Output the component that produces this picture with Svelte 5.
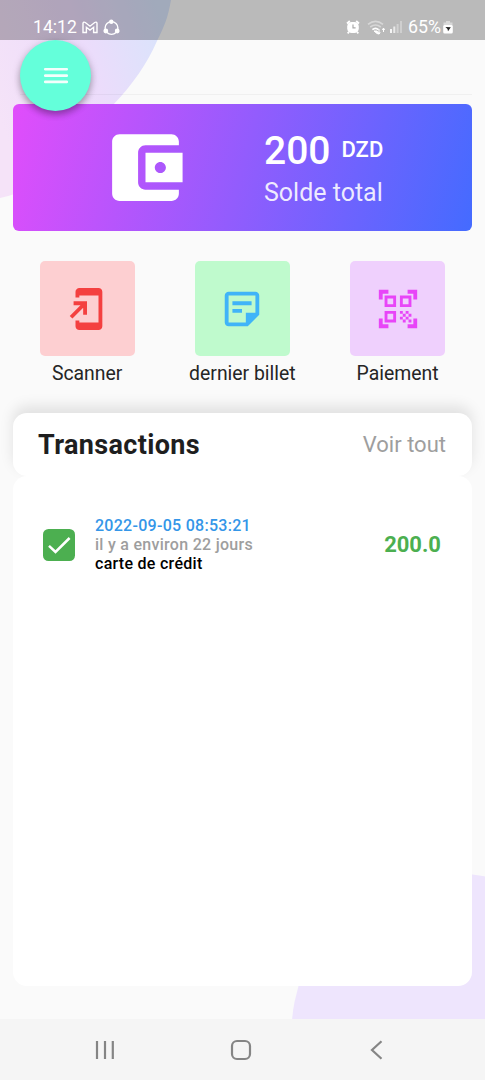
<script lang="ts">
	interface Transaction {
		date: string;
		ago: string;
		method: string;
		amount: string;
	}

	const actions = [
		{ id: 'scan', label: 'Scanner' },
		{ id: 'note', label: 'dernier billet' },
		{ id: 'pay', label: 'Paiement' }
	];

	const transactions: Transaction[] = [
		{
			date: '2022-09-05 08:53:21',
			ago: 'il y a environ 22 jours',
			method: 'carte de crédit',
			amount: '200.0'
		}
	];
</script>

<div class="screen">
	<svg class="backdrop" viewBox="0 0 485 1080" aria-hidden="true">
		<defs>
			<linearGradient id="blob" x1="0" y1="0.6" x2="1" y2="0.2">
				<stop offset="0" stop-color="#f5e3f8" />
				<stop offset="0.55" stop-color="#ecdcfb" />
				<stop offset="1" stop-color="#d8e4fb" />
			</linearGradient>
		</defs>
		<path d="M0 0H171C168 18 164 27 157 41C147 64 133 84 113 105C90 145 45 190 0 198Z" fill="url(#blob)" />
		<circle cx="451.5" cy="1033" r="160" fill="#eee5fd" />
	</svg>

	<header class="status">
		<span class="clock">14:12</span>
		<svg class="mail" width="16" height="13" viewBox="0 0 16 13">
			<path d="M1 11.5V2.2Q1.5.4 3.3 1.5L8 5.2l4.7-3.7Q14.5.4 15 2.2v9.3h-3.4V6.3L8 9 4.4 6.3v5.2z" fill="none" stroke="#fff" stroke-width="1.4" />
		</svg>
		<svg class="share" width="17" height="17" viewBox="0 0 17 17">
			<circle cx="8.5" cy="9" r="6.4" fill="none" stroke="#fff" stroke-width="1.4" />
			<circle cx="8.3" cy="2.7" r="2.2" fill="#fff" />
			<circle cx="2.8" cy="12" r="2.4" fill="#fff" />
			<circle cx="14.2" cy="12" r="2.4" fill="#fff" />
		</svg>
		<span class="spacer"></span>
		<svg width="14" height="14" viewBox="0 0 14 14">
			<path d="M1 3.5 3.8 1M13 3.5 10.2 1M3 12l-1.4 1.3M11 12l1.4 1.3" stroke="#fff" stroke-width="1.8" />
			<rect x="1.2" y="2" width="11.6" height="11" rx="4.5" fill="#fff" />
			<path d="M7 4.5v3.3h2.6" fill="none" stroke="#aaa" stroke-width="1.2" />
		</svg>
		<svg class="wifi" width="19" height="15" viewBox="0 0 19 15">
			<path d="M1 4.3Q8.5-1.5 16 4.3M3.2 7Q8.5 3 13.8 7" fill="none" stroke="#fff" stroke-opacity=".42" stroke-width="1.7" />
			<path d="M5.4 9.7Q8.5 7 11.5 9.7" fill="none" stroke="#fff" stroke-width="1.7" />
			<path d="M7 11h3l2 3-2-.5zM12 9v5M11 12.5l1 1.6 1.2-1.6M16.5 12V8.5M15.3 9.8l1.2-1.7 1.2 1.7" fill="#fff" stroke="#fff" stroke-width="1" />
		</svg>
		<svg class="signal" width="14" height="14" viewBox="0 0 14 14" fill="#fff">
			<rect x="1" y="9" width="2" height="4" opacity=".85" />
			<rect x="4.3" y="6.5" width="2" height="6.5" opacity=".7" />
			<rect x="7.6" y="4" width="2" height="9" opacity=".35" />
			<rect x="11" y="1" width="2" height="12" opacity=".3" />
		</svg>
		<span class="battery-text">65%</span>
		<svg class="battery" width="10" height="13" viewBox="0 0 10 13">
			<path d="M3 0h4v1.5h2.5V5H.5V1.5H3z" fill="#fff" opacity=".45" />
			<rect x=".2" y="4" width="9.6" height="8.5" rx="1.5" fill="#fff" />
			<path d="M2.4 6 7.8 6.2 5 10.2 4.5 8z" fill="#222" />
		</svg>
	</header>

	<div class="topbar">
		<button class="menu" aria-label="Menu">
			<svg width="24" height="18" viewBox="0 0 24 18">
				<path d="M1.2 2.2h21.6M1.2 8.6h21.6M1.2 14.9h21.6" stroke="#f4fffc" stroke-width="2.6" stroke-linecap="round" />
			</svg>
		</button>
	</div>

	<section class="balance">
		<svg class="wallet" width="89" height="89" viewBox="0 0 24 24" fill="#fff">
			<path d="M21 18v1c0 1.1-.9 2-2 2H5c-1.11 0-2-.9-2-2V5c0-1.1.89-2 2-2h14c1.1 0 2 .9 2 2v1h-9c-1.11 0-2 .9-2 2v8c0 1.1.89 2 2 2h9zm-9-2h10V8H12v8zm4-2.5c-.83 0-1.5-.67-1.5-1.5s.67-1.5 1.5-1.5 1.5.67 1.5 1.5-.67 1.5-1.5 1.5z" />
		</svg>
		<div class="figures">
			<div class="total">
				<span class="value">200</span>
				<span class="currency">DZD</span>
			</div>
			<div class="caption">Solde total</div>
		</div>
	</section>

	<nav class="actions">
		{#each actions as action (action.id)}
			<div class="action">
				<button class="tile {action.id}" aria-label={action.label}>
					<svg width="46" height="46" viewBox="0 0 24 24" fill="currentColor">
						{#if action.id === 'scan'}
							<path d="M18 1.01L8 1c-1.1 0-2 .9-2 2v3h2V5h10v14H8v-1H6v3c0 1.1.9 2 2 2h10c1.1 0 2-.9 2-2V3c0-1.1-.9-1.99-2-1.99zM10 15h2V8H5v2h3.59L3 15.59 4.41 17 10 11.41V15z" />
						{:else if action.id === 'note'}
							<path d="M19 3H5c-1.1 0-2 .9-2 2v14c0 1.1.9 2 2 2h10l6-6V5c0-1.1-.9-2-2-2zM5 5h14v9h-5v5H5V5zM7 8h10v2H7zM7 12h5v2H7z" />
						{:else}
							<path d="M9.5 6.5v3h-3v-3h3M11 5H5v6h6V5zm-1.5 9.5v3h-3v-3h3M11 13H5v6h6v-6zm6.5-6.5v3h-3v-3h3M19 5h-6v6h6V5zm-6 8h1.5v1.5H13V13zm1.5 1.5H16V16h-1.5v-1.5zM16 13h1.5v1.5H16V13zm-3 3h1.5v1.5H13V16zm1.5 1.5H16V19h-1.5v-1.5zM16 16h1.5v1.5H16V16zm1.5-1.5H19V16h-1.5v-1.5zm0 3H19V19h-1.5v-1.5zM22 7h-2V4h-3V2h5v5zm0 15v-5h-2v3h-3v2h5zM2 22h5v-2H4v-3H2v5zM2 2v5h2V4h3V2H2z" />
						{/if}
					</svg>
				</button>
				<span class="label">{action.label}</span>
			</div>
		{/each}
	</nav>

	<section class="history">
		<div class="history-head">
			<h2>Transactions</h2>
			<span class="see-all">Voir tout</span>
		</div>
		<div class="history-body">
			{#each transactions as item (item.date)}
				<div class="row">
					<svg class="check" width="32" height="32" viewBox="0 0 32 32">
						<rect width="32" height="32" rx="5.5" fill="#4caf50" />
						<path d="M6 16.8l6.5 6.2L26.6 9" fill="none" stroke="#fff" stroke-width="2.5" />
					</svg>
					<div class="details">
						<span class="date">{item.date}</span>
						<span class="ago">{item.ago}</span>
						<span class="method">{item.method}</span>
					</div>
					<span class="amount">{item.amount}</span>
				</div>
			{/each}
		</div>
	</section>

	<footer class="navbar">
		<svg width="20" height="20" viewBox="0 0 20 20">
			<path d="M2 1v18M10 1v18M17.8 1v18" />
		</svg>
		<svg width="22" height="22" viewBox="0 0 22 22">
			<rect x="2" y="2" width="18" height="18" rx="5" />
		</svg>
		<svg width="20" height="20" viewBox="0 0 20 20">
			<path d="M14.5 1.2 5 10l9.5 8.8" />
		</svg>
	</footer>
</div>

<style>
	:global(body) {
		margin: 0;
	}

	.screen {
		position: relative;
		display: flex;
		flex-direction: column;
		width: 485px;
		height: 1080px;
		overflow: hidden;
		background: #fafafa;
		font-family: Roboto, 'Liberation Sans', sans-serif;
	}

	.backdrop {
		position: absolute;
		inset: 0;
		width: 485px;
		height: 1080px;
	}

	button {
		border: 0;
		padding: 0;
		font: inherit;
	}

	.status,
	.topbar,
	.balance,
	.actions,
	.history,
	.navbar {
		position: relative;
		box-sizing: border-box;
		flex: none;
	}

	.status {
		display: flex;
		align-items: center;
		height: 40px;
		padding: 14px 32px 0 33px;
		background: rgba(0, 0, 0, 0.255);
		color: #fff;
		font-size: 18px;
		line-height: 24px;
	}

	.clock {
		width: 44px;
		font-size: 17.6px;
	}

	.mail {
		margin-left: 5px;
	}

	.share {
		margin-left: 5px;
	}

	.spacer {
		flex: 1;
	}

	.wifi {
		margin-left: 7px;
	}

	.signal {
		margin-left: 3px;
	}

	.battery-text {
		margin-left: 5px;
		font-size: 17.8px;
	}

	.battery {
		margin-left: 2px;
	}

	.topbar {
		z-index: 1;
		height: 55px;
		margin: 0 13px 9px 20px;
		border-bottom: 1px solid rgba(0, 0, 0, 0.04);
	}

	.menu {
		display: flex;
		align-items: center;
		justify-content: center;
		width: 71px;
		height: 71px;
		border-radius: 50%;
		background: #64ffda;
		box-shadow: 0 4px 6px rgba(0, 0, 0, 0.24), 0 2px 10px rgba(0, 0, 0, 0.16);
	}

	.balance {
		display: flex;
		height: 127px;
		margin: 0 13px;
		padding-left: 88px;
		border-radius: 6px;
		background: linear-gradient(105.5deg, #e14dfb, #446bff);
		color: #fff;
	}

	.wallet {
		margin-top: 19px;
	}

	.figures {
		margin: 24px 0 0 74px;
	}

	.total {
		display: flex;
		gap: 11px;
		height: 48px;
		line-height: 46px;
	}

	.value {
		font-size: 39px;
		font-weight: 500;
	}

	.currency {
		font-size: 22px;
		font-weight: 500;
		line-height: 43px;
	}

	.caption {
		font-size: 25px;
		line-height: 34px;
		color: rgba(255, 255, 255, 0.88);
	}

	.actions {
		display: grid;
		grid-template-columns: repeat(3, 155.25px);
		margin: 30px 0 0 9.5px;
		height: 152px;
	}

	.action {
		display: flex;
		flex-direction: column;
		align-items: center;
	}

	.tile {
		display: flex;
		align-items: center;
		justify-content: center;
		width: 95px;
		height: 95px;
		border-radius: 5px;
	}

	.scan {
		background: #fdcfd1;
		color: #f44040;
	}

	.note {
		background: #bffacd;
		color: #40b4f8;
	}

	.pay {
		background: #efd0fd;
		color: #e845f8;
	}

	.label {
		margin-top: 6px;
		font-size: 19.4px;
		line-height: 24px;
		color: #252525;
		white-space: nowrap;
	}

	.history {
		height: 573px;
		margin: 0 13px;
	}

	.history-head {
		display: flex;
		align-items: center;
		justify-content: space-between;
		box-sizing: border-box;
		height: 63px;
		padding: 0 26px 0 25px;
		border-radius: 14px;
		background: #fff;
		box-shadow: 0 -7px 14px rgba(0, 0, 0, 0.1);
	}

	h2 {
		margin: 0;
		font-size: 27px;
		font-weight: 700;
		letter-spacing: 0.35px;
		color: #1e1e1e;
	}

	.see-all {
		font-size: 22px;
		color: #9e9e9e;
	}

	.history-body {
		position: relative;
		box-sizing: border-box;
		height: 510px;
		padding: 40px 31px 0 30px;
		border-radius: 14px;
		background: #fff;
	}

	.row {
		display: flex;
		align-items: center;
	}

	.details {
		display: flex;
		flex: 1;
		flex-direction: column;
		margin-left: 20px;
		font-size: 16px;
		font-weight: 500;
		letter-spacing: 0.28px;
		line-height: 19px;
	}

	.date {
		color: #3496e8;
	}

	.ago {
		color: #9e9e9e;
	}

	.method {
		color: #000;
	}

	.amount {
		font-size: 22px;
		font-weight: 700;
		color: #4caf50;
	}

	.navbar {
		display: flex;
		align-items: center;
		justify-content: space-between;
		height: 61px;
		margin-top: auto;
		padding: 0 98px 0 95px;
		background: #f5f5f5;
	}

	.navbar svg {
		fill: none;
		stroke: #858585;
		stroke-width: 2.2;
	}
</style>
